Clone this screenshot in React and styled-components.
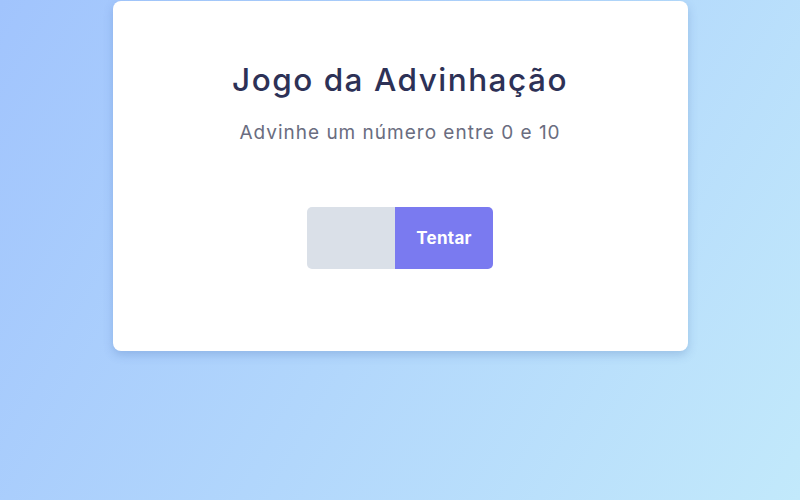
import React from "react";
import styled, { createGlobalStyle } from "styled-components";

const Global = createGlobalStyle`
  html, body { margin: 0; padding: 0; }
  body {
    min-height: 100vh;
    background: linear-gradient(120deg, #a1c4fd 0%, #c2e9fb 100%);
    background-attachment: fixed;
    font-family: "Inter", "Open Sans", sans-serif;
  }
`;

const Page = styled.main`
  display: flex;
  justify-content: center;
  padding-top: 1px;
`;

const Card = styled.section`
  width: 575px;
  height: 350px;
  box-sizing: border-box;
  background: #ffffff;
  border-radius: 8px;
  box-shadow: 0 4px 10px rgba(60, 100, 170, 0.25);
  display: flex;
  flex-direction: column;
  align-items: center;
  padding-top: 60px;
`;

const Title = styled.h1`
  margin: 0;
  font-family: "Inter", sans-serif;
  font-weight: 500;
  font-size: 31.5px;
  line-height: 38px;
  color: #2d3156;
  letter-spacing: 1.5px;
`;

const Subtitle = styled.p`
  margin: 22px 0 0;
  font-family: "Inter", sans-serif;
  font-weight: 400;
  font-size: 19px;
  line-height: 24px;
  color: #6a6d80;
  letter-spacing: 1px;
`;

const Form = styled.form`
  display: flex;
  margin-top: 62px;
`;

const NumberInput = styled.input`
  width: 88px;
  height: 62px;
  box-sizing: border-box;
  border: none;
  outline: none;
  background: #dae0e8;
  border-radius: 5px 0 0 5px;
  padding: 0 12px;
  font-size: 18px;
`;

const Submit = styled.button`
  width: 98px;
  height: 62px;
  border: none;
  background: #7a7af0;
  color: #ffffff;
  border-radius: 0 5px 5px 0;
  font-family: "Inter", sans-serif;
  font-weight: 700;
  font-size: 17px;
  letter-spacing: 0.3px;
  cursor: pointer;
`;

export default function App() {
  return (
    <>
      <Global />
      <Page>
        <Card>
          <Title>Jogo da Advinhação</Title>
          <Subtitle>Advinhe um número entre 0 e 10</Subtitle>
          <Form onSubmit={(e) => e.preventDefault()}>
            <NumberInput type="text" aria-label="número" />
            <Submit type="submit">Tentar</Submit>
          </Form>
        </Card>
      </Page>
    </>
  );
}
